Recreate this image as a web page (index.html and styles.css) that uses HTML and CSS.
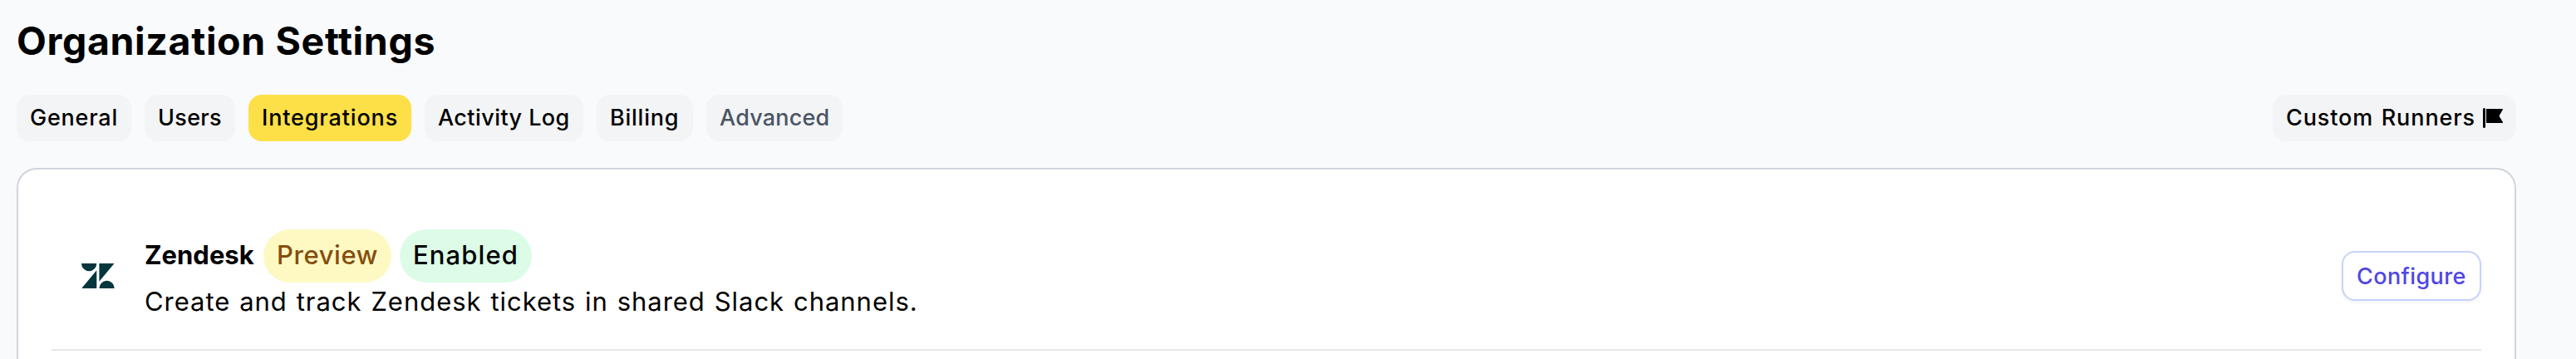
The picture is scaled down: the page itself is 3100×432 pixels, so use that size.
FILE: index.html
```html
<!DOCTYPE html>
<html lang="en">
<head>
<meta charset="utf-8">
<title>Organization Settings</title>
<link rel="stylesheet" href="styles.css">
</head>
<body>
<main class="page">
  <h1 class="title">Organization Settings</h1>
  <nav class="tabs">
    <a class="tab tab-general">General</a>
    <a class="tab tab-users">Users</a>
    <a class="tab tab-integrations active">Integrations</a>
    <a class="tab tab-activity">Activity Log</a>
    <a class="tab tab-billing">Billing</a>
    <a class="tab tab-advanced">Advanced</a>
    <a class="tab tab-runners"><span>Custom Runners</span>
      <svg class="flag" viewBox="0 0 24 24"><path d="M0 1.500Q0 0 1.500 0T3 1.500v21Q3 24 1.500 24T0 22.500zM4 1h19.200q1.200 0 .6 1.100L19.500 9.500l4.300 7.300q.6 1.200-.6 1.200H4z"/></svg>
    </a>
  </nav>
  <section class="card">
    <article class="row">
      <svg class="logo" viewBox="0 0 40 30"><path d="M0 0h18.300a9.150 9.150 0 0 1-18.300 0zM21.400 0H39.500L21.400 21.800zM18.300 8.200V30H.2zM21.400 30a9.150 9.150 0 0 1 18.300 0z"/></svg>
      <div class="info">
        <div class="heading"><strong class="name">Zendesk</strong><span class="badge preview">Preview</span><span class="badge enabled">Enabled</span></div>
        <p class="desc">Create and track Zendesk tickets in shared Slack channels.</p>
      </div>
      <button class="configure">Configure</button>
    </article>
  </section>
</main>
</body>
</html>
```
FILE: styles.css
```css
* { box-sizing: border-box; }
body {
  margin: 0;
  background: #f9fafc;
  color: #000;
  font-family: Inter, "Liberation Sans", sans-serif;
}
.page { padding: 17px 72px 0 20px; }
.title {
  margin: 0 0 33px;
  height: 64px;
  font-size: 46.5px;
  line-height: 64px;
  font-weight: 700;
  letter-spacing: .63px;
  white-space: nowrap;
}
.tabs { display: flex; gap: 16px; height: 56px; }
.tab {
  display: flex;
  align-items: center;
  height: 56px;
  padding: 0 0 0 16px;
  border-radius: 16px;
  background: #f3f4f6;
  font-size: 27px;
  line-height: 56px;
  font-weight: 500;
  white-space: nowrap;
}
.tab.active { background: #fde047; }
.tab-general { width: 138px; letter-spacing: .77px; }
.tab-users { width: 109px; letter-spacing: .32px; }
.tab-integrations { width: 196px; letter-spacing: .85px; }
.tab-activity { width: 191px; letter-spacing: .43px; }
.tab-billing { width: 116px; letter-spacing: .75px; }
.tab-advanced { width: 164px; letter-spacing: .2px; color: #4b5563; }
.tab-runners {
  width: 293px;
  margin-left: auto;
  padding-right: 16px;
  justify-content: space-between;
  letter-spacing: .9px;
  word-spacing: 1.4px;
}
.flag { width: 24px; height: 24px; }
.card {
  height: 230px;
  margin-top: 32px;
  padding: 40px 40px 0;
  border: 2px solid #d1d5db;
  border-bottom: 0;
  border-radius: 24px 24px 0 0;
  background: #fff;
}
.row {
  display: flex;
  align-items: center;
  height: 178px;
  padding: 0 0 0 36px;
  border-bottom: 2px solid #e5e7eb;
}
.logo { width: 40px; height: 30px; fill: #03363d; }
.info { margin-left: 36px; }
.heading { display: flex; height: 64px; line-height: 62px; }
.name {
  width: 143px;
  font-size: 31px;
  font-weight: 700;
}
.badge {
  height: 64px;
  padding-left: 16px;
  border-radius: 32px;
  font-size: 31px;
  font-weight: 500;
}
.preview { width: 154px; margin-right: 10px; background: #fef9c3; color: #854d0e; letter-spacing: .6px; }
.enabled { width: 159px; background: #dcfce7; letter-spacing: 1.1px; }
.desc {
  margin: 0;
  height: 48px;
  font-size: 31px;
  line-height: 46px;
  letter-spacing: .97px;
  word-spacing: 1.2px;
  white-space: nowrap;
}
.configure {
  width: 168px;
  height: 60px;
  margin-left: auto;
  padding: 0 0 0 16px;
  border: 2px solid #c7d2fe;
  border-radius: 16px;
  background: #fff;
  box-shadow: 0 2px 4px rgba(0, 0, 0, .05);
  color: #4f46e5;
  font: 500 27px Inter, "Liberation Sans", sans-serif;
  letter-spacing: .4px;
  text-align: left;
}
```
